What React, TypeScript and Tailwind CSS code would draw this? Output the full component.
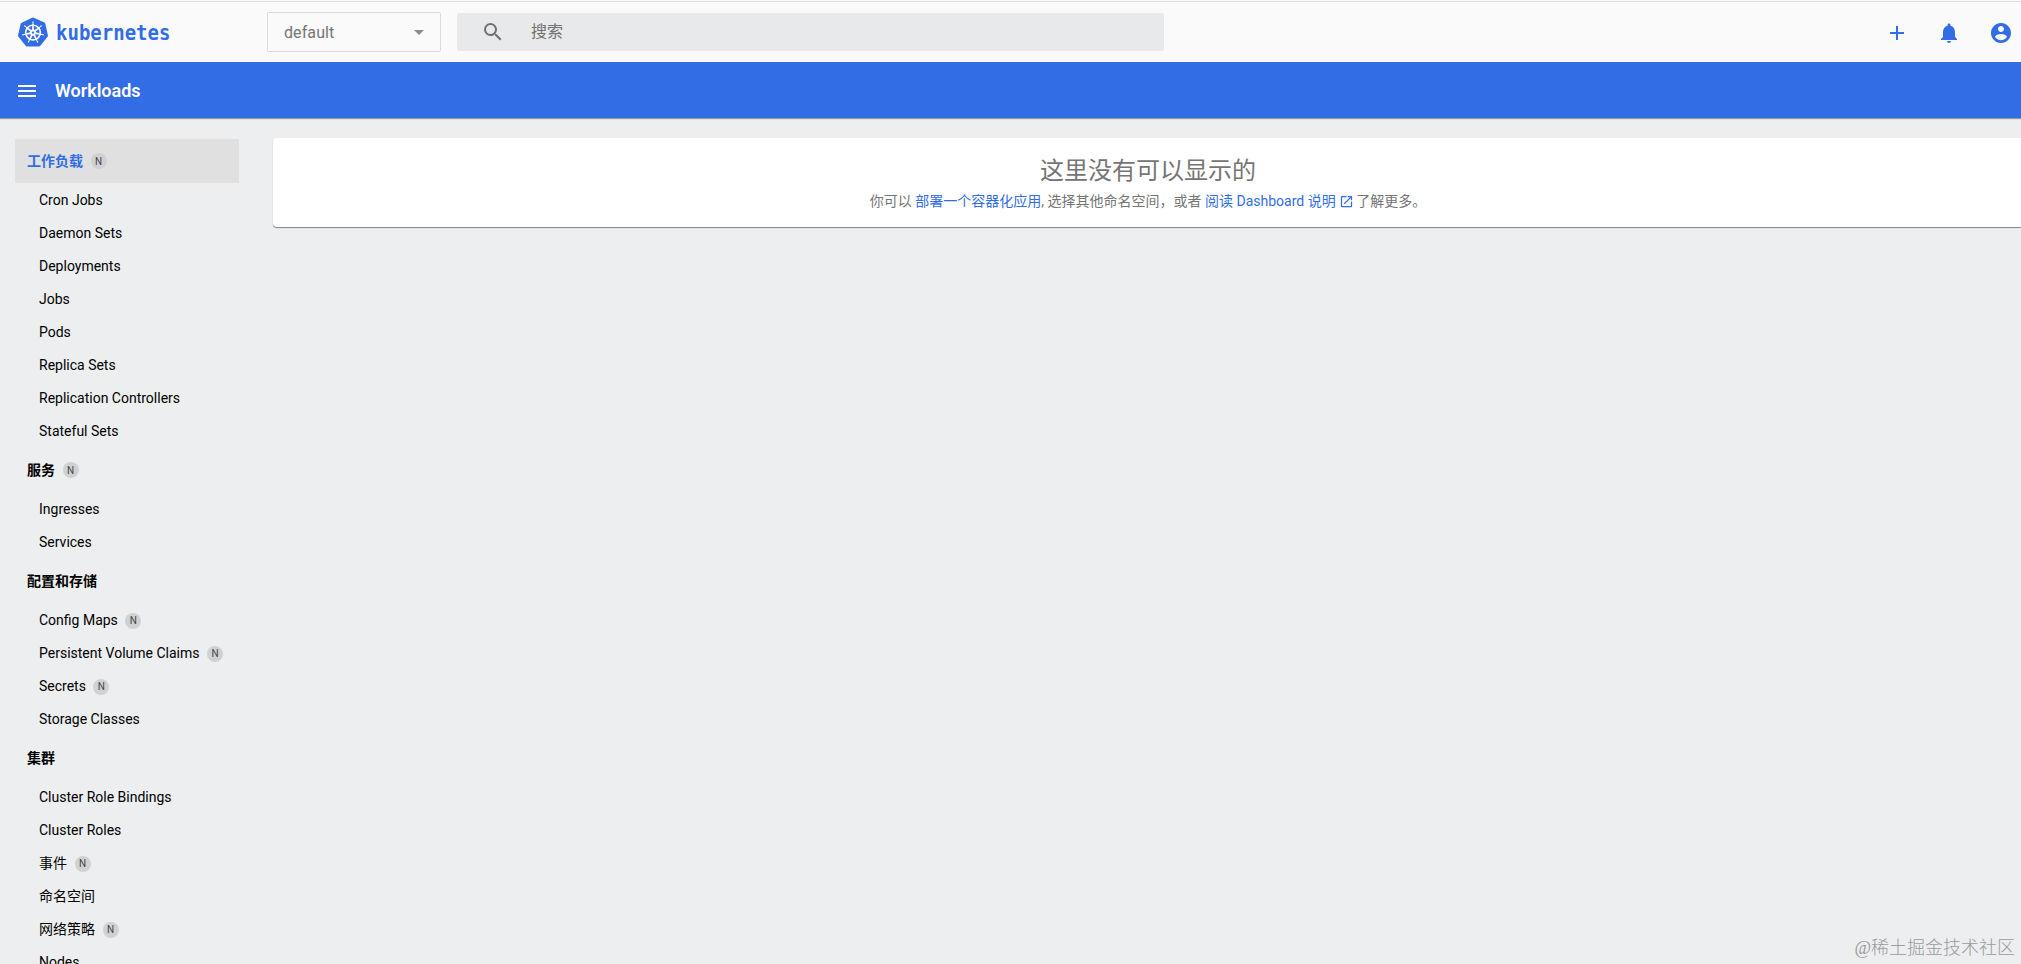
import React from 'react'
import { MdAdd, MdArrowDropDown, MdMenu, MdNotifications, MdOpenInNew, MdSearch } from 'react-icons/md'
import { SiKubernetes } from 'react-icons/si'

type Item = { label: string; namespaced?: boolean }
type Group = Item & { active?: boolean; items: Item[] }

const groups: Group[] = [
  {
    label: '工作负载',
    namespaced: true,
    active: true,
    items: [
      { label: 'Cron Jobs' },
      { label: 'Daemon Sets' },
      { label: 'Deployments' },
      { label: 'Jobs' },
      { label: 'Pods' },
      { label: 'Replica Sets' },
      { label: 'Replication Controllers' },
      { label: 'Stateful Sets' },
    ],
  },
  {
    label: '服务',
    namespaced: true,
    items: [{ label: 'Ingresses' }, { label: 'Services' }],
  },
  {
    label: '配置和存储',
    items: [
      { label: 'Config Maps', namespaced: true },
      { label: 'Persistent Volume Claims', namespaced: true },
      { label: 'Secrets', namespaced: true },
      { label: 'Storage Classes' },
    ],
  },
  {
    label: '集群',
    items: [
      { label: 'Cluster Role Bindings' },
      { label: 'Cluster Roles' },
      { label: '事件', namespaced: true },
      { label: '命名空间' },
      { label: '网络策略', namespaced: true },
      { label: 'Nodes' },
    ],
  },
]

const Badge: React.FC = () => (
  <span className="ml-[7.5px] flex h-4 w-4 items-center justify-center rounded-full bg-[#d0d1d2] pt-px text-[10px] leading-none font-normal text-[#454647]">
    N
  </span>
)

const Header: React.FC = () => (
  <header className="flex h-[62px] shrink-0 items-center bg-[#fafafa] pt-0.5 pl-[18px] shadow-[inset_0_1px_0_0_#fafafa,inset_0_2px_0_0_#dedede]">
    <div className="flex w-[249px] items-center text-[#326de6]">
      <SiKubernetes className="h-[30px] w-[30px] shrink-0" />
      <span className="ml-2 scale-y-110 font-['DejaVu_Sans_Mono',monospace] text-[19px] font-bold">
        kubernetes
      </span>
    </div>
    <div className="flex h-10 w-[174px] items-center justify-between rounded-[2px] border border-[#dcdcdc] pr-[9px] pl-4 text-[16px] text-[#757575]">
      <span className="pt-0.5 tracking-[0.1px]">default</span>
      <MdArrowDropDown className="h-6 w-6 text-[#8c8c8c]" />
    </div>
    <div className="ml-4 flex h-[38px] w-[707px] items-center rounded-[2px] bg-[#e8e9ea] pl-6 text-[16px] text-[#707070]">
      <MdSearch className="h-6 w-6" />
      <span className="ml-[26px] pb-px">搜索</span>
    </div>
    <div className="ml-auto flex items-center gap-7 pt-0.5 pr-2 text-[#326de6]">
      <MdAdd className="h-6 w-6" />
      <MdNotifications className="h-6 w-6" />
      <svg className="h-6 w-6" fill="currentColor" viewBox="0 0 24 24">
        <path d="M12 2C6.48 2 2 6.48 2 12s4.48 10 10 10 10-4.48 10-10S17.52 2 12 2zm0 3c1.66 0 3 1.34 3 3s-1.34 3-3 3-3-1.34-3-3 1.34-3 3-3zm0 14.2c-2.5 0-4.71-1.28-6-3.22.03-1.99 4-3.08 6-3.08 1.99 0 5.97 1.09 6 3.08-1.29 1.94-3.5 3.22-6 3.22z" />
      </svg>
    </div>
  </header>
)

const Sidebar: React.FC = () => (
  <nav className="mt-px w-[224px] shrink-0 text-[14px] text-black">
    {groups.map((group) => (
      <div key={group.label}>
        <div
          className={
            group.active
              ? 'mb-px flex h-11 items-center bg-[#e0e0e0] pl-3 font-bold text-[#326de6]'
              : 'mb-px flex h-11 items-center pl-3 font-bold'
          }
        >
          {group.label}
          {group.namespaced && <Badge />}
        </div>
        {group.items.map((item) => (
          <div key={item.label} className="flex h-[33px] items-center pl-6">
            {item.label}
            {item.namespaced && <Badge />}
          </div>
        ))}
      </div>
    ))}
  </nav>
)

const EmptyCard: React.FC = () => (
  <section className="ml-[34px] h-[89px] w-[1750px] shrink-0 rounded-[4px] bg-white pt-[17px] text-center text-[#757575] shadow-[0_1px_1px_0_rgba(0,0,0,0.45)]">
    <h1 className="text-[24px] leading-8">这里没有可以显示的</h1>
    <p className="-mt-px flex items-center justify-center text-[14px] leading-[30px] whitespace-pre">
      你可以 <a className="text-[#326de6]">部署一个容器化应用</a>, 选择其他命名空间，或者{' '}
      <a className="flex items-center text-[#326de6]">
        阅读 Dashboard 说明 <MdOpenInNew className="h-[15px] w-[15px]" />
      </a>
      <span className="ml-0.5">了解更多。</span>
    </p>
  </section>
)

export const App: React.FC = () => {
  return (
    <div className="relative flex h-[964px] w-full flex-col overflow-hidden bg-[#eceeef] font-['Roboto','Noto_Sans_CJK_SC',sans-serif]">
      <Header />
      <div className="flex h-14 shrink-0 items-center bg-[#326de6] pt-px pl-[15px] text-white shadow-[0_1px_1px_0_rgba(0,0,0,0.35)]">
        <MdMenu className="h-6 w-6" />
        <h2 className="ml-4 text-[18px] font-semibold">Workloads</h2>
      </div>
      <main className="flex min-h-0 flex-1 items-start pt-5 pl-[15px]">
        <Sidebar />
        <EmptyCard />
      </main>
      <div className="absolute right-[6px] bottom-0.5 font-['Liberation_Serif','Noto_Sans_CJK_SC',serif] text-[18px] font-light text-[#999b9c]">
        @稀土掘金技术社区
      </div>
    </div>
  )
}

export default App
